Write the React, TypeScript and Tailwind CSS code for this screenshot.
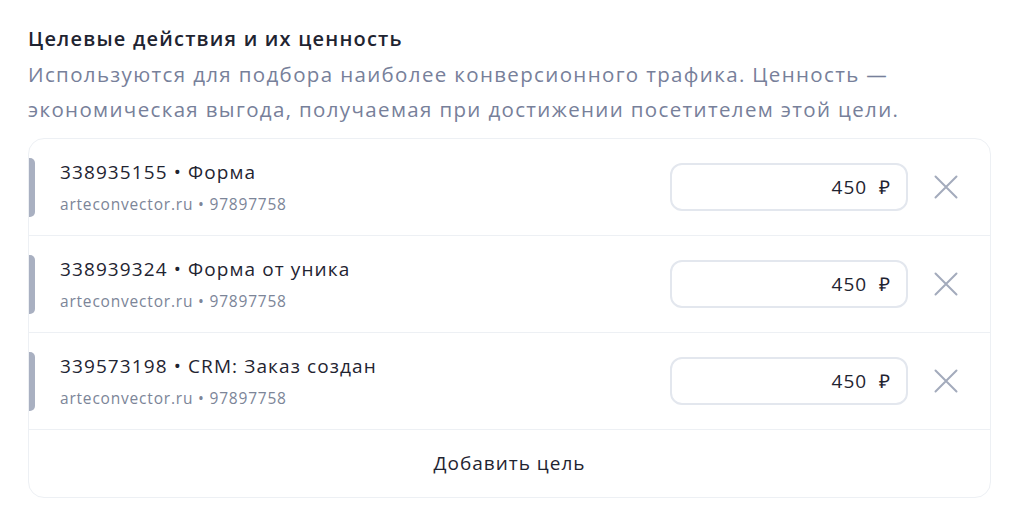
interface Goal {
  id: string;
  name: string;
  site: string;
  counter: string;
  value: number;
}

const goals: Goal[] = [
  { id: '338935155', name: 'Форма', site: 'arteconvector.ru', counter: '97897758', value: 450 },
  { id: '338939324', name: 'Форма от уника', site: 'arteconvector.ru', counter: '97897758', value: 450 },
  { id: '339573198', name: 'CRM: Заказ создан', site: 'arteconvector.ru', counter: '97897758', value: 450 },
];

function CrossIcon() {
  return (
    <svg width="24" height="24" viewBox="0 0 24 24" fill="none" stroke="currentColor" strokeWidth="2" strokeLinecap="round">
      <path d="M1.5 1.5 22.5 22.5M22.5 1.5 1.5 22.5" />
    </svg>
  );
}

function GoalRow({ goal }: { goal: Goal }) {
  return (
    <li className="flex h-[97px] items-center border-b border-[#edf0f4]">
      <div className="-ml-px h-[59px] w-[7px] shrink-0 rounded-r-[5px] bg-[#a9b0c1]" />
      <div className="ml-[25px] -mt-[2px] flex min-w-0 flex-1 flex-col">
        <div className="text-[19px] leading-[26px] tracking-[1.1px] text-[#1f2431]">
          {goal.id} • {goal.name}
        </div>
        <div className="mt-[9px] text-[15.5px] leading-[20px] tracking-[0.8px] text-[#7c8598]">
          {goal.site} • {goal.counter}
        </div>
      </div>
      <div className="flex h-[48px] w-[238px] items-center justify-end rounded-[12px] border-2 border-[#e3e7ee] pr-[15px] text-[19px] tracking-[1px] text-[#1f2431]">
        {goal.value}&nbsp;&nbsp;₽
      </div>
      <button className="ml-[24px] mr-[30px] flex h-[28px] w-[28px] items-center justify-center text-[#a3abbc]">
        <CrossIcon />
      </button>
    </li>
  );
}

export default function App() {
  return (
    <div className="min-h-[528px] bg-white px-[28px] pt-[25px] font-['Open_Sans',sans-serif]">
      <h2 className="text-[20px] font-semibold leading-[28px] tracking-[1.2px] text-[#1f2431]">
        Целевые действия и их ценность
      </h2>
      <p className="mt-[4px] text-[20.5px] leading-[35px] tracking-[1.35px] text-[#77809a]">
        Используются для подбора наиболее конверсионного трафика. Ценность —
        <br />
        экономическая выгода, получаемая при достижении посетителем этой цели.
      </p>
      <div className="mt-[11px] w-[963px] overflow-hidden rounded-[16px] border border-[#edf0f4]">
        <ul>
          {goals.map((g) => (
            <GoalRow key={g.id} goal={g} />
          ))}
        </ul>
        <button className="flex h-[67px] w-full items-center justify-center text-[19px] tracking-[1px] text-[#1f2431]">
          Добавить цель
        </button>
      </div>
    </div>
  );
}
